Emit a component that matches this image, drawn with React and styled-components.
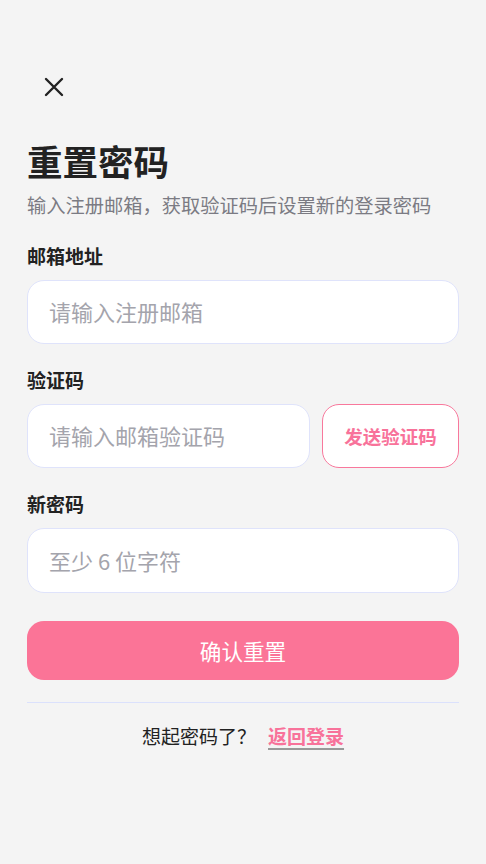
import React from 'react';
import styled, { createGlobalStyle } from 'styled-components';

const GlobalStyle = createGlobalStyle`
  body {
    margin: 0;
    background: #f4f4f4;
    font-family: "Noto Sans CJK SC", "Noto Sans", sans-serif;
  }
  * { box-sizing: border-box; }
`;

const Page = styled.div`
  min-height: 864px;
  padding: 77px 27px 0;
  display: flex;
  flex-direction: column;
`;

const CloseButton = styled.button`
  width: 20px;
  height: 20px;
  margin-left: 17px;
  padding: 0;
  border: none;
  background: none;
  display: flex;
  cursor: pointer;
`;

const Title = styled.h1`
  margin: 42px 0 0;
  font-size: 35.5px;
  line-height: 44px;
  font-weight: 700;
  color: #222;
`;

const Subtitle = styled.p`
  margin: 8px 0 0;
  font-size: 19.25px;
  line-height: 28px;
  color: #7b7b83;
`;

const Field = styled.div`
  margin-top: ${(p) => p.$top}px;
  display: flex;
  flex-direction: column;
`;

const Label = styled.label`
  font-size: 19px;
  line-height: 24px;
  font-weight: 700;
  color: #222;
  margin-bottom: 12px;
`;

const Input = styled.input`
  height: ${(p) => p.$h || 64}px;
  width: 100%;
  min-width: 0;
  flex-shrink: 0;
  border: 1.5px solid #dfe3fb;
  border-radius: 17px;
  background: #fff;
  padding: 0 21px 2px;
  font-family: inherit;
  font-size: 22px;
  color: #222;
  outline: none;
  &::placeholder {
    color: #a4a4ac;
  }
`;

const Row = styled.div`
  display: flex;
  gap: 12px;
  & > ${Input} {
    flex: 1;
  }
`;

const SendButton = styled.button`
  width: 137px;
  height: 64px;
  flex-shrink: 0;
  border: 1.5px solid #f8789c;
  border-radius: 17px;
  background: #fff;
  color: #f8729a;
  font-family: inherit;
  font-size: 18.5px;
  font-weight: 700;
  cursor: pointer;
`;

const Submit = styled.button`
  margin-top: 28px;
  height: 59px;
  flex-shrink: 0;
  border: none;
  border-radius: 17px;
  background: #fb7497;
  color: #fff;
  font-family: inherit;
  font-size: 21.6px;
  cursor: pointer;
`;

const Divider = styled.hr`
  margin: 22px 0 0;
  border: none;
  height: 1px;
  background: #dbe1fc;
`;

const Footer = styled.p`
  margin: 21px 0 0;
  text-align: center;
  font-size: 19px;
  line-height: 24px;
  color: #222;
`;

const BackLink = styled.a`
  margin-left: 12px;
  color: #f8729a;
  font-weight: 700;
  text-decoration: underline;
  text-decoration-color: #999;
  text-underline-offset: 4px;
  text-decoration-thickness: 2px;
  cursor: pointer;
`;

const CloseIcon = () => (
  <svg width="20" height="20" viewBox="0 0 20 20">
    <path d="M2 2 L18 18 M18 2 L2 18" stroke="#222" strokeWidth="2.4" strokeLinecap="round" />
  </svg>
);

export default function App() {
  return (
    <>
      <GlobalStyle />
      <Page>
        <CloseButton aria-label="关闭">
          <CloseIcon />
        </CloseButton>
        <Title>重置密码</Title>
        <Subtitle>输入注册邮箱，获取验证码后设置新的登录密码</Subtitle>

        <Field $top={25}>
          <Label>邮箱地址</Label>
          <Input placeholder="请输入注册邮箱" />
        </Field>

        <Field $top={24}>
          <Label>验证码</Label>
          <Row>
            <Input placeholder="请输入邮箱验证码" />
            <SendButton>发送验证码</SendButton>
          </Row>
        </Field>

        <Field $top={24}>
          <Label>新密码</Label>
          <Input type="password" $h={65} placeholder="至少 6 位字符" />
        </Field>

        <Submit>确认重置</Submit>
        <Divider />
        <Footer>
          想起密码了？
          <BackLink>返回登录</BackLink>
        </Footer>
      </Page>
    </>
  );
}
